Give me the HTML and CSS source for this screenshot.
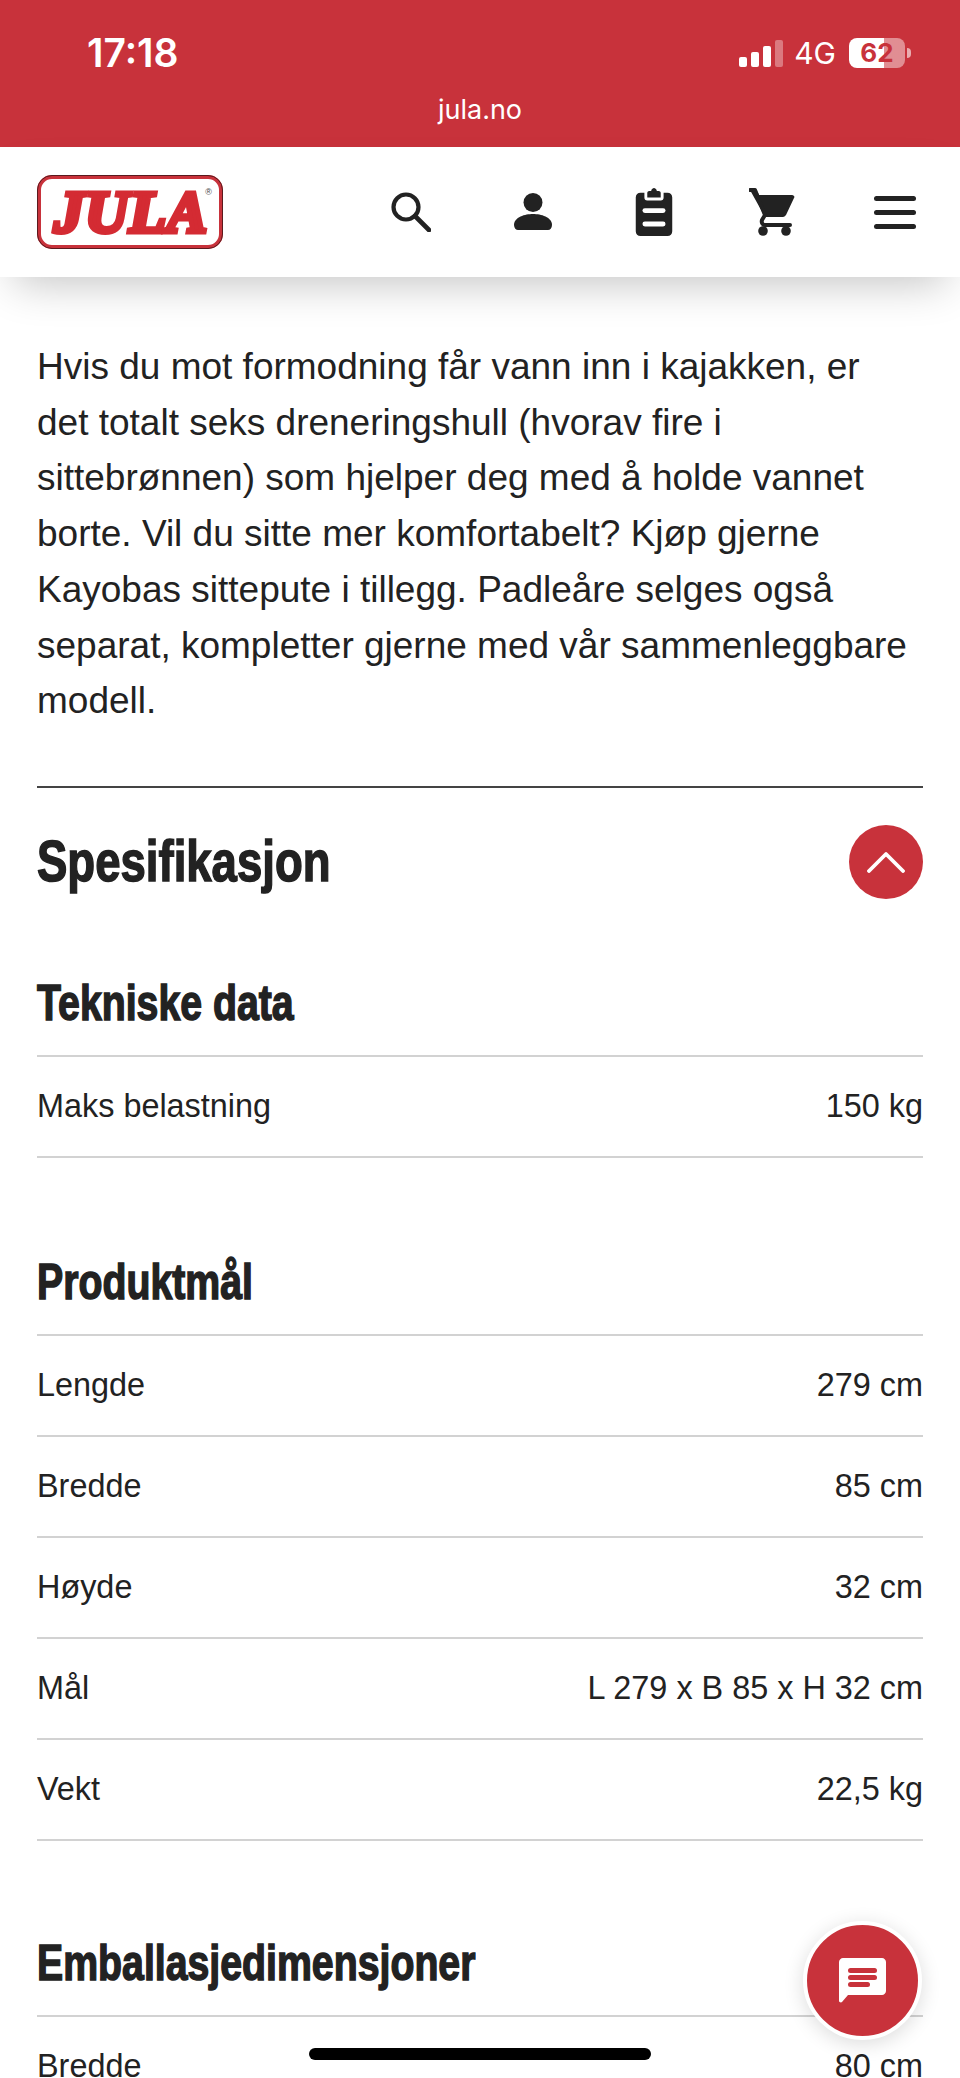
FILE: index.html
```html
<!DOCTYPE html>
<html lang="nb">
<head>
    <meta charset="UTF-8">
    <meta name="viewport" content="width=device-width, initial-scale=1.0">
    <title>Jula</title>
    <link rel="stylesheet" href="styles.css">
</head>
<body>
    <div class="statusbar">
        <div class="status-row">
            <span class="time">17:18</span>
            <div class="status-right">
                <div class="signal"><i class="s1"></i><i class="s2"></i><i class="s3"></i><i class="s4"></i></div>
                <span class="net">4G</span>
                <div class="battery"><span class="battery-level">62</span></div>
                <div class="battery-nub"></div>
            </div>
        </div>
        <div class="url">jula.no</div>
    </div>

    <header class="topbar">
        <div class="logo"><span class="logo-text">JULA</span><span class="logo-reg">®</span></div>
        <nav class="icons">
            <svg class="icon-search" viewBox="0 0 40 40"><circle cx="15" cy="15" r="12.5" fill="none" stroke="#222" stroke-width="4.2"/><path d="M24 24 L38 38" stroke="#222" stroke-width="4.6" stroke-linecap="round"/></svg>
            <svg class="icon-user" viewBox="0 0 38 38"><circle cx="19" cy="9.500" r="9.500" fill="#222"/><path d="M0 32c0-8 11-11 19-11s19 3 19 11c0 3-2 5-4 5H4c-2 0-4-2-4-5z" fill="#222"/></svg>
            <svg class="icon-list" viewBox="0 0 38 50"><path d="M5 5h4v5c0 2 1 3 3 3h14c2 0 3-1 3-3V5h4c3 0 5 2 5 5v35c0 3-2 5-5 5H5c-3 0-5-2-5-5V10c0-3 2-5 5-5z" fill="#222"/><path d="M12 10V5c0-1 1-2 2-2h2c.5-2 2-3 3-3s2.500 1 3 3h2c1 0 2 1 2 2v5z" fill="#222"/><rect x="7" y="21" width="24" height="5" rx="2.500" fill="#fff"/><rect x="7" y="35" width="24" height="5" rx="2.500" fill="#fff"/></svg>
            <svg class="icon-cart" viewBox="0 0 46 48"><path d="M1 2h4c2 0 3 1 4 3l1 2h33c2 0 3 2 2 3l-8 17c-1 1-2 2-3 2H16z" fill="#222"/><path d="M1 2h5l10 25-3 5c-1 3 1 5 3 5h25" fill="none" stroke="#222" stroke-width="4" stroke-linecap="round" stroke-linejoin="round"/><circle cx="14" cy="43" r="4.800" fill="#222"/><circle cx="37" cy="43" r="4.800" fill="#222"/></svg>
            <div class="icon-menu"><i></i><i></i><i></i></div>
        </nav>
    </header>

    <main class="content">
        <p class="intro">Hvis du mot formodning får vann inn i kajakken, er det totalt seks dreneringshull (hvorav fire i sittebrønnen) som hjelper deg med å holde vannet borte. Vil du sitte mer komfortabelt? Kjøp gjerne Kayobas sittepute i tillegg. Padleåre selges også separat, kompletter gjerne med vår sammenleggbare modell.</p>

        <div class="spec-head">
            <h2><span class="narrow">Spesifikasjon</span></h2>
            <div class="toggle">
                <svg viewBox="0 0 38 22"><path d="M2 20 L19 3 L36 20" fill="none" stroke="#fff" stroke-width="3.800" stroke-linecap="round" stroke-linejoin="round"/></svg>
            </div>
        </div>

        <h3 class="group-first"><span class="narrow">Tekniske data</span></h3>
        <div class="row"><span>Maks belastning</span><span>150 kg</span></div>

        <h3><span class="narrow">Produktmål</span></h3>
        <div class="row"><span>Lengde</span><span>279 cm</span></div>
        <div class="row"><span>Bredde</span><span>85 cm</span></div>
        <div class="row"><span>Høyde</span><span>32 cm</span></div>
        <div class="row"><span>Mål</span><span>L 279 x B 85 x H 32 cm</span></div>
        <div class="row"><span>Vekt</span><span>22,5 kg</span></div>

        <h3 class="group-last"><span class="narrow">Emballasjedimensjoner</span></h3>
        <div class="row"><span>Bredde</span><span>80 cm</span></div>
    </main>

    <!-- floating chat button and the phone's home bar -->
    <div class="chat">
        <svg viewBox="0 0 47 45" class="chat-icon"><path d="M4 0h39c2 0 4 2 4 4v29c0 2-2 4-4 4H9l-6 7c-1 1-3 0-3-1V4c0-2 2-4 4-4z" fill="#fff"/><rect x="9" y="10" width="29" height="5" rx="2.500" fill="#c8323b"/><rect x="9" y="17" width="29" height="5" rx="2.500" fill="#c8323b"/><rect x="9" y="24" width="22" height="5" rx="2.500" fill="#c8323b"/></svg>
    </div>
    <div class="homebar"></div>
</body>
</html>
```

FILE: styles.css
```css
* {
    box-sizing: border-box;
}
html, body {
    margin: 0;
    height: 2078px;
    overflow: hidden;
}
body {
    position: relative;
    background-color: #fff;
    font-family: "Liberation Sans", Arial, sans-serif;
    color: #222;
}

/* status bar */
.statusbar {
    height: 147px;
    background-color: #c8323b;
    color: #fff;
}
.status-row {
    height: 94px;
    padding: 10px 49px 0 87px;
    display: flex;
    justify-content: space-between;
    align-items: center;
}
.time {
    font-family: Inter, sans-serif;
    font-weight: 600;
    font-size: 39px;
}
.status-right {
    display: flex;
    align-items: center;
    padding-top: 2px;
}
.signal {
    display: flex;
    align-items: flex-end;
    gap: 4px;
    height: 27px;
    margin-right: 11px;
}
.signal i {
    width: 8px;
    background-color: #fff;
    border-radius: 2px;
}
.s1 { height: 10px; }
.s2 { height: 15px; }
.s3 { height: 21px; }
.s4 { height: 27px; opacity: 0.35; }
.net {
    font-family: Inter, sans-serif;
    font-size: 30px;
    margin-right: 13px;
}
.battery {
    width: 56px;
    height: 30px;
    border-radius: 8px;
    background: linear-gradient(to right, #fff 62%, rgba(255, 255, 255, 0.45) 62%);
    color: #c8323b;
    text-align: center;
}
.battery-level {
    font-family: Inter, sans-serif;
    font-weight: 700;
    font-size: 26px;
    line-height: 30px;
}
.battery-nub {
    width: 4px;
    height: 10px;
    margin-left: 2px;
    background-color: rgba(255, 255, 255, 0.6);
    border-radius: 0 4px 4px 0;
}
.url {
    text-align: center;
    font-family: Inter, sans-serif;
    font-size: 27px;
    line-height: 32px;
}

/* header */
.topbar {
    position: relative;
    height: 130px;
    padding: 0 44px 0 37px;
    display: flex;
    justify-content: space-between;
    align-items: center;
    background-color: #fff;
    box-shadow: 0 20px 44px -14px rgba(0, 0, 0, 0.24);
}
.logo {
    position: relative;
    width: 186px;
    height: 74px;
    border: 4px solid #c8323b;
    outline: 1px solid #5a1a1e;
    outline-offset: -1px;
    border-radius: 15px;
    display: flex;
    justify-content: center;
    align-items: center;
}
.logo-text {
    font-family: "Liberation Serif", serif;
    font-weight: 700;
    font-style: italic;
    font-size: 60px;
    line-height: 1;
    color: #d42b33;
    -webkit-text-stroke: 5px #d42b33;
    text-shadow: 0 0 2px #5a1a1e;
    letter-spacing: 1px;
    margin-left: 2px;
}
.logo-reg {
    position: absolute;
    top: 8px;
    right: 7px;
    font-size: 9px;
    color: #444;
}
.icons {
    display: flex;
    align-items: center;
}
.icon-search { width: 40px; height: 40px; margin-right: 83px; }
.icon-user { width: 38px; height: 38px; margin-right: 83px; }
.icon-list { width: 38px; height: 48px; margin-right: 76px; }
.icon-cart { width: 46px; height: 48px; margin-right: 79px; }
.icon-menu {
    width: 42px;
    display: flex;
    flex-direction: column;
    gap: 9px;
}
.icon-menu i {
    display: block;
    height: 5px;
    background-color: #222;
    border-radius: 3px;
}

/* page body */
.content {
    padding: 62px 37px 0;
}
.intro {
    margin: 0 0 57px;
    padding-right: 8px;
    font-size: 37px;
    line-height: 55.7px;
}
.spec-head {
    height: 150px;
    border-top: 2px solid #444;
    display: flex;
    justify-content: space-between;
    align-items: center;
}
h2 {
    margin: 0 0 3px;
    font-size: 58px;
    font-weight: 700;
}
/* no condensed face installed, so the heading text is squeezed */
.narrow {
    display: inline-block;
    white-space: nowrap;
    transform: scaleX(0.785);
    transform-origin: left center;
    -webkit-text-stroke: 1.5px #222;
}
.toggle {
    width: 74px;
    height: 74px;
    border-radius: 50%;
    background-color: #c8323b;
    display: flex;
    justify-content: center;
    align-items: center;
}
.toggle svg {
    width: 38px;
    height: 22px;
}
h3 {
    margin: 0;
    height: 178px;
    padding-bottom: 23px;
    display: flex;
    align-items: flex-end;
    font-size: 50px;
    font-weight: 700;
    border-bottom: 2px solid #d2d2d2;
}
h3.group-first {
    height: 121px;
}
h3.group-last {
    height: 176px;
}
.row {
    height: 101px;
    display: flex;
    justify-content: space-between;
    align-items: center;
    font-size: 32.4px;
    border-bottom: 2px solid #d2d2d2;
}

/* overlays */
.chat {
    position: absolute;
    left: 803px;
    top: 1921px;
    width: 119px;
    height: 119px;
    border: 4px solid #fff;
    border-radius: 50%;
    background-color: #c8323b;
    box-shadow: 0 4px 20px rgba(0, 0, 0, 0.14);
    display: flex;
    justify-content: center;
    align-items: center;
}
.chat-icon {
    width: 47px;
    height: 45px;
}
.homebar {
    position: absolute;
    left: 309px;
    top: 2048px;
    width: 342px;
    height: 12px;
    border-radius: 6px;
    background-color: #000;
}
```
